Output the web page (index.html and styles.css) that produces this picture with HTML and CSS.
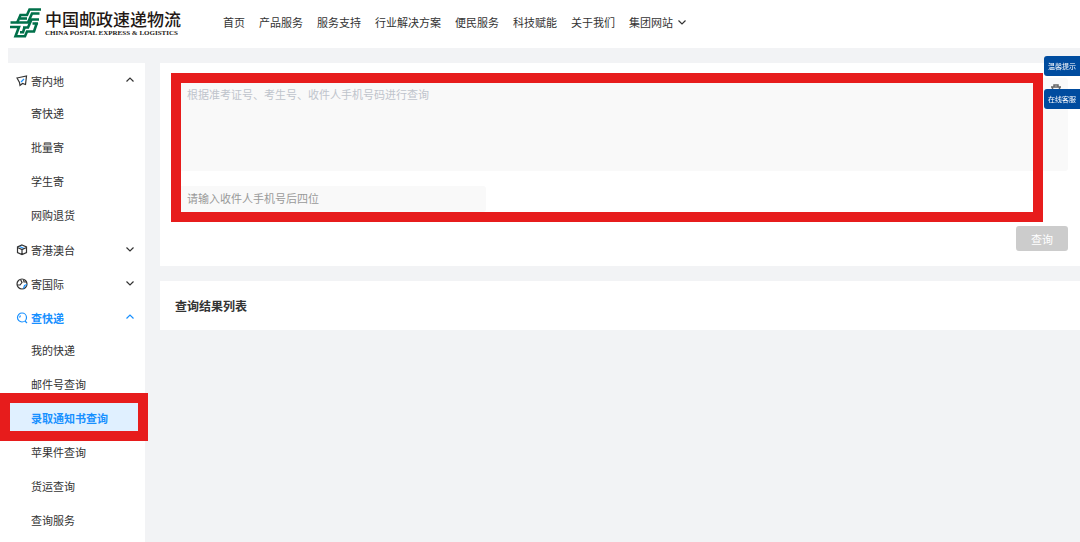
FILE: index.html
```html
<!DOCTYPE html>
<html lang="zh-CN">
<head>
    <meta charset="UTF-8">
    <meta name="viewport" content="width=device-width, initial-scale=1.0">
    <title>中国邮政速递物流</title>
    <link rel="stylesheet" href="styles.css">
</head>
<body>
    <header class="header">
        <a class="logo" href="#">
            <svg class="logo-mark" viewBox="0 0 32 30" aria-hidden="true">
                <g fill="none" stroke="#00704a" stroke-width="2.6">
                    <path d="M31 1.500H19.500L17 7H10.500L7 15"/>
                    <path d="M29.500 5.500H22L18 14.500H0.500"/>
                    <path d="M17 10.500H10"/>
                    <path d="M29 11.500H21.500L18 19.500H13"/>
                    <path d="M28 15.500H22.500M27 14.500L24 23.500H17L15 28.300H5.500L9 19H0"/>
                    <path d="M10 24.300H13L14.500 19.500"/>
                </g>
            </svg>
            <span class="logo-text">
                <span class="logo-cn">中国邮政速递物流</span>
                <span class="logo-en">CHINA POSTAL EXPRESS &amp; LOGISTICS</span>
            </span>
        </a>
        <nav class="nav">
            <a href="#">首页</a>
            <a href="#">产品服务</a>
            <a href="#">服务支持</a>
            <a href="#">行业解决方案</a>
            <a href="#">便民服务</a>
            <a href="#">科技赋能</a>
            <a href="#">关于我们</a>
            <a class="nav-more" href="#">集团网站
                <svg class="arrow" viewBox="0 0 8 8"><path d="M0.500 2.500L4 6L7.500 2.500"/></svg>
            </a>
        </nav>
    </header>

    <div class="page">
        <aside class="sidebar">
            <button type="button" class="menu-title">
                <svg class="icon" viewBox="0 0 12 12">
                    <path d="M1 3L10.500 1L9.500 9.500L6.500 8.500L4 10.500L3.500 7.500Z"/>
                    <path class="blue" d="M5 7L8 4"/>
                </svg>
                <span>寄内地</span>
                <svg class="arrow" viewBox="0 0 8 8"><path d="M0.500 5.500L4 2L7.500 5.500"/></svg>
            </button>
            <ul class="submenu">
                <li><a href="#">寄快递</a></li>
                <li><a href="#">批量寄</a></li>
                <li><a href="#">学生寄</a></li>
                <li><a href="#">网购退货</a></li>
            </ul>
            <button type="button" class="menu-title">
                <svg class="icon" viewBox="0 0 12 12">
                    <path class="blue" d="M3.500 2.500L8 4.500"/>
                    <path d="M6 1L10.500 3V8.500L6 10.500L1.500 8.500V3ZM1.500 3.500L6 5.500L10.500 3.500M6 5.500V10.500"/>
                </svg>
                <span>寄港澳台</span>
                <svg class="arrow" viewBox="0 0 8 8"><path d="M0.500 2.500L4 6L7.500 2.500"/></svg>
            </button>
            <button type="button" class="menu-title">
                <svg class="icon" viewBox="0 0 12 12">
                    <circle cx="6" cy="6" r="5"/>
                    <path d="M1 7L4 7L6 4.500L4.500 1.500M7.500 1.500L8 4L10.500 4"/>
                    <path class="blue" d="M11 6.500L8.500 7.500L7.500 10.500"/>
                </svg>
                <span>寄国际</span>
                <svg class="arrow" viewBox="0 0 8 8"><path d="M0.500 2.500L4 6L7.500 2.500"/></svg>
            </button>
            <button type="button" class="menu-title open">
                <svg class="icon" viewBox="0 0 12 12">
                    <circle cx="6" cy="5.500" r="4.500"/>
                    <path d="M9 9L11 11M3.500 5.500L4.500 3.500"/>
                </svg>
                <span>查快递</span>
                <svg class="arrow" viewBox="0 0 8 8"><path d="M0.500 5.500L4 2L7.500 5.500"/></svg>
            </button>
            <ul class="submenu">
                <li><a href="#">我的快递</a></li>
                <li><a href="#">邮件号查询</a></li>
                <li class="marked"><a class="active" href="#">录取通知书查询</a></li>
                <li><a href="#">苹果件查询</a></li>
                <li><a href="#">货运查询</a></li>
                <li><a href="#">查询服务</a></li>
            </ul>
        </aside>

        <main class="content">
            <form class="card search">
                <textarea class="numbers" aria-label="查询号码" placeholder="根据准考证号、考生号、收件人手机号码进行查询"></textarea>
                <input class="phone" type="text" aria-label="手机号后四位" placeholder="请输入收件人手机号后四位">
                <button type="button" class="clear" aria-label="清空">
                    <svg viewBox="0 0 10 10"><path d="M0 3H10M3 2.500V1H7V2.500M1.500 3V9.500H8.500V3"/></svg>
                </button>
                <button type="submit" class="submit" disabled>查询</button>
                <div class="frame"></div>
            </form>
            <section class="card result">
                <h2>查询结果列表</h2>
            </section>
        </main>
    </div>

    <div class="float-bar">
        <button type="button">温馨提示</button>
        <button type="button">在线客服</button>
    </div>
</body>
</html>
```
FILE: styles.css
```css
*{
    margin: 0;
    padding: 0;
    box-sizing: border-box;
}

body{
    min-height: 100vh;
    display: flex;
    flex-direction: column;
    background-color: #fff;
    color: #333;
    font-family: "Noto Sans CJK SC", sans-serif;
    font-size: 11px;
    line-height: 16px;
    overflow-x: hidden;
}

a{
    color: inherit;
    text-decoration: none;
}

button, input, textarea{
    font: inherit;
    color: inherit;
    border: none;
}

button{
    background: none;
    cursor: pointer;
}

svg{
    fill: none;
    stroke: currentColor;
}

.header{
    display: flex;
    align-items: center;
    height: 48px;
    padding: 0 10px 2px;
}

.logo{
    display: flex;
    align-items: center;
    gap: 3px;
    color: #231815;
}

.logo-mark{
    width: 32px;
    height: 30px;
}

.logo-text{
    display: flex;
    flex-direction: column;
    width: 142px;
    padding-top: 2px;
    white-space: nowrap;
}

.logo-cn{
    font-size: 17px;
    font-weight: 500;
    line-height: 18px;
}

.logo-en{
    font-family: "Liberation Serif", serif;
    font-size: 7px;
    font-weight: bold;
    line-height: 10px;
}

.nav{
    display: flex;
    gap: 14px;
    margin-bottom: 2px;
    margin-left: 36px;
    white-space: nowrap;
}

.nav-more{
    display: flex;
    align-items: center;
    gap: 5px;
}

.arrow{
    width: 8px;
    height: 8px;
    stroke-width: 1.2;
}

.page{
    flex: 1;
    display: flex;
    gap: 15px;
    margin-left: 8px;
    padding-top: 15px;
    background-color: #f2f3f5;
}

.sidebar{
    width: 137px;
    flex-shrink: 0;
    padding-top: 1px;
    background-color: #fff;
}

.menu-title{
    display: flex;
    align-items: center;
    width: 100%;
    height: 34px;
    padding: 0 11px 0 8px;
    text-align: left;
}

.menu-title span{
    flex: 1;
    margin-left: 3px;
}

.menu-title .arrow{
    margin-bottom: 3px;
}

.menu-title.open{
    color: #1890ff;
    font-weight: bold;
}

.icon{
    width: 12px;
    height: 12px;
    stroke-width: 1.2;
}

.icon .blue{
    stroke: #1890ff;
}

.submenu{
    margin: -2px 0 1px;
    list-style: none;
}

.submenu a{
    display: flex;
    align-items: center;
    height: 34px;
    padding-left: 23px;
}

.submenu .active{
    background-color: #e0f0ff;
    color: #1890ff;
    font-weight: bold;
}

.marked{
    position: relative;
}

.marked::after{
    content: "";
    position: absolute;
    inset: -8px -3px -6px -8px;
    border: 10px solid #e71c1c;
    pointer-events: none;
}

.content{
    flex: 1;
    min-width: 0;
}

.card{
    background-color: #fff;
}

.search{
    position: relative;
    display: flex;
    flex-direction: column;
    align-items: flex-start;
    padding: 15px 12px 15px 15px;
}

.numbers{
    display: block;
    width: 100%;
    height: 93px;
    padding: 8px 12px;
    border-radius: 3px;
    background-color: #f9f9f9;
    resize: none;
}

.numbers::placeholder{
    color: #bfc4cc;
}

.phone{
    width: 311px;
    height: 26px;
    margin-top: 15px;
    padding: 0 12px 2px;
    border-radius: 3px;
    background-color: #f9f9f9;
}

.phone::placeholder{
    color: #999;
}

.clear{
    position: absolute;
    top: 21px;
    right: 19px;
    width: 10px;
    height: 10px;
    display: flex;
    color: #666;
}

.clear svg{
    width: 10px;
    height: 10px;
    stroke-width: 1.5;
}

.submit{
    align-self: flex-end;
    width: 52px;
    height: 25px;
    margin-top: 14px;
    border-radius: 3px;
    background-color: #ccc;
    color: #fff;
}

.frame{
    position: absolute;
    top: 10px;
    right: 37px;
    bottom: 44px;
    left: 11px;
    border: 10px solid #e71c1c;
    pointer-events: none;
}

.result{
    margin-top: 15px;
    padding: 16px 15px;
}

.result h2{
    font-size: 12px;
    line-height: 17px;
}

.float-bar{
    position: fixed;
    top: 56px;
    right: 0;
    display: flex;
    flex-direction: column;
    gap: 13px;
}

.float-bar button{
    width: 36px;
    height: 20px;
    border-radius: 3px 0 0 3px;
    background-color: #004c9f;
    color: #fff;
    font-size: 7px;
    line-height: 20px;
    white-space: nowrap;
}
```
